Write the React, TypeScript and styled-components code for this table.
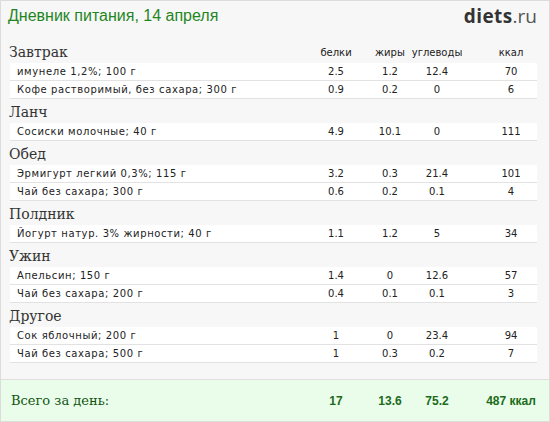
import React, { ReactElement } from "react";
import styled, { createGlobalStyle, css } from "styled-components";

interface Item {
  name: string;
  b: string;
  f: string;
  c: string;
  k: string;
}

interface Meal {
  title: string;
  items: Item[];
}

const meals: Meal[] = [
  {
    title: "Завтрак",
    items: [
      { name: "имунеле 1,2%; 100 г", b: "2.5", f: "1.2", c: "12.4", k: "70" },
      { name: "Кофе растворимый, без сахара; 300 г", b: "0.9", f: "0.2", c: "0", k: "6" },
    ],
  },
  {
    title: "Ланч",
    items: [{ name: "Сосиски молочные; 40 г", b: "4.9", f: "10.1", c: "0", k: "111" }],
  },
  {
    title: "Обед",
    items: [
      { name: "Эрмигурт легкий 0,3%; 115 г", b: "3.2", f: "0.3", c: "21.4", k: "101" },
      { name: "Чай без сахара; 300 г", b: "0.6", f: "0.2", c: "0.1", k: "4" },
    ],
  },
  {
    title: "Полдник",
    items: [{ name: "Йогурт натур. 3% жирности; 40 г", b: "1.1", f: "1.2", c: "5", k: "34" }],
  },
  {
    title: "Ужин",
    items: [
      { name: "Апельсин; 150 г", b: "1.4", f: "0", c: "12.6", k: "57" },
      { name: "Чай без сахара; 200 г", b: "0.4", f: "0.1", c: "0.1", k: "3" },
    ],
  },
  {
    title: "Другое",
    items: [
      { name: "Сок яблочный; 200 г", b: "1", f: "0", c: "23.4", k: "94" },
      { name: "Чай без сахара; 500 г", b: "1", f: "0.3", c: "0.2", k: "7" },
    ],
  },
];

export default function App(): ReactElement {
  return (
    <>
      <GlobalStyle />
      <Page>
        <TopBar>
          <Title>Дневник питания, 14 апреля</Title>
          <Logo>
            diets<span>.ru</span>
          </Logo>
        </TopBar>

        <Table>
          {meals.map((meal, i) => (
            <Group key={meal.title}>
              <MealHead>
                <MealTitle>{meal.title}</MealTitle>
                {i === 0 && (
                  <>
                    <Label>белки</Label>
                    <Label>жиры</Label>
                    <Label>углеводы</Label>
                    <Label>ккал</Label>
                  </>
                )}
              </MealHead>
              {meal.items.map((it) => (
                <Row key={it.name}>
                  <Name>{it.name}</Name>
                  <Num>{it.b}</Num>
                  <Num>{it.f}</Num>
                  <Num>{it.c}</Num>
                  <Num>{it.k}</Num>
                </Row>
              ))}
            </Group>
          ))}
        </Table>

        <Total>
          <TotalLabel>Всего за день:</TotalLabel>
          <TotalNum>17</TotalNum>
          <TotalNum>13.6</TotalNum>
          <TotalNum>75.2</TotalNum>
          <TotalNum>487 ккал</TotalNum>
        </Total>
      </Page>
    </>
  );
}

const GlobalStyle = createGlobalStyle`
  html, body {
    margin: 0;
    padding: 0;
    background: #f7f7f7;
  }
`;

// shared column layout: name, белки, жиры, углеводы, ккал
const cols = css`
  display: grid;
  grid-template-columns: 1fr 54px 54px 40px 80px;
  & > :nth-child(5) {
    padding-left: 28px;
  }
`;

const Page = styled.div`
  width: 550px;
  height: 422px;
  box-sizing: border-box;
  border: 1px solid #dcdcdc;
  background: #f7f7f7;
  display: flex;
  flex-direction: column;
  font-family: "DejaVu Sans", Verdana, sans-serif;
  color: #222;
`;

const TopBar = styled.div`
  height: 38px;
  display: flex;
  justify-content: space-between;
  align-items: flex-start;
  padding: 6px 12px 0 7px;
  box-sizing: border-box;
`;

const Title = styled.h1`
  margin: 0;
  font-family: "Liberation Sans", Arial, sans-serif;
  font-weight: normal;
  font-size: 16px;
  color: #1f861f;
`;

const Logo = styled.div`
  font-family: "Open Sans", "Liberation Sans", sans-serif;
  font-weight: 700;
  font-size: 19px;
  line-height: 18px;
  color: #333;
  letter-spacing: 0.4px;
  span {
    font-weight: 400;
    color: #555;
    letter-spacing: 0;
  }
`;

const Table = styled.div`
  padding: 0 12px 0 9px;
`;

const Group = styled.div``;

const MealHead = styled.div`
  ${cols};
  height: 24px;
  align-items: end;
  padding-bottom: 3px;
  box-sizing: border-box;
`;

const MealTitle = styled.div`
  font-family: "DejaVu Serif", Georgia, serif;
  font-size: 14px;
  line-height: 16px;
  color: #333;
  margin-left: -1px;
`;

const Label = styled.div`
  justify-self: center;
  white-space: nowrap;
  font-size: 10px;
  line-height: 14px;
  color: #222;
`;

const Row = styled.div`
  ${cols};
  height: 18px;
  box-sizing: border-box;
  background: #fff;
  border-bottom: 1px solid #e2e2e2;
  align-items: center;
  font-size: 10px;
`;

const Name = styled.div`
  padding-left: 7px;
  white-space: nowrap;
  letter-spacing: 0.6px;
`;

const Num = styled.div`
  text-align: center;
`;

const Total = styled.div`
  ${cols};
  margin-top: auto;
  height: 42px;
  box-sizing: border-box;
  border-top: 1px solid #dedede;
  background: #eafdea;
  align-items: center;
  padding: 0 12px 0 10px;
  color: #1b6b1b;
`;

const TotalLabel = styled.div`
  font-family: "DejaVu Serif", Georgia, serif;
  font-size: 13px;
  color: #125512;
`;

const TotalNum = styled.div`
  text-align: center;
  font-family: "Liberation Sans", Arial, sans-serif;
  font-weight: 700;
  font-size: 12px;
`;
